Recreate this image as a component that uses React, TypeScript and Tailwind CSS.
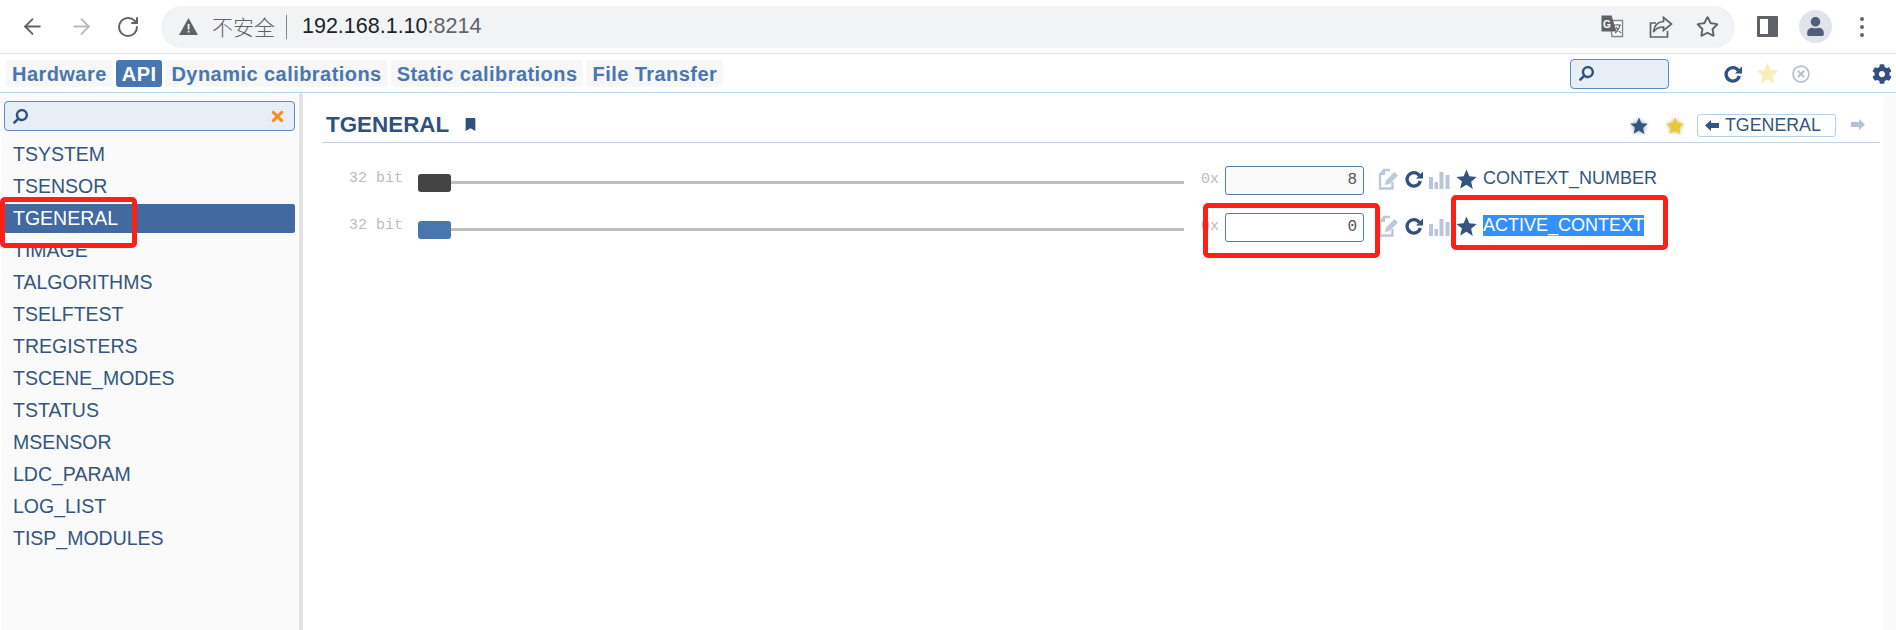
import React from 'react';
import { ArrowLeft, ArrowRight, RotateCw } from 'lucide-react';
import { FaSearch, FaTimes, FaCog, FaBookmark, FaRegTimesCircle, FaRegStar, FaUser } from 'react-icons/fa';

const modules = ['TSYSTEM', 'TSENSOR', 'TGENERAL', 'TIMAGE', 'TALGORITHMS', 'TSELFTEST', 'TREGISTERS', 'TSCENE_MODES', 'TSTATUS', 'MSENSOR', 'LDC_PARAM', 'LOG_LIST', 'TISP_MODULES'];
const tabs = ['Hardware', 'API', 'Dynamic calibrations', 'Static calibrations', 'File Transfer'];

function StarIcon({ size, className }: { size: number; className?: string }) {
  return (
    <svg width={size} height={size} viewBox="0 0 20 20" fill="currentColor" className={`shrink-0 ${className ?? ''}`}>
      <path d="M10 .5l2.700 6.500 7 .6-5.300 4.600 1.600 6.900L10 15l-6 3.600 1.600-6.900L.3 7.600l7-.6z" />
    </svg>
  );
}

function RepeatIcon({ className }: { className?: string }) {
  return (
    <svg width="18" height="18" viewBox="0 0 18 18" className={`shrink-0 ${className ?? ''}`}>
      <path d="M14.200 5.400A6.700 6.700 0 1 0 15.300 11" fill="none" stroke="currentColor" strokeWidth="3.300" />
      <path d="M18 1.500V8.500H11z" fill="currentColor" />
    </svg>
  );
}

function BlockArrow({ className }: { className?: string }) {
  return (
    <svg width="14" height="11" viewBox="0 0 14 11" fill="currentColor" className={`shrink-0 ${className ?? ''}`}>
      <path d="M0 5.500 6 0v3h8v5H6v3z" />
    </svg>
  );
}

function EditIcon() {
  return (
    <svg width="21" height="22" viewBox="0 0 21 22" className="text-[#bcc9da] shrink-0">
      <path d="M12 2H6L2 6.500V20.500H14.500V14" fill="none" stroke="currentColor" strokeWidth="2.400" />
      <path d="M2 7H7V2z" fill="currentColor" />
      <path d="M7 17l1-4.500L16.500 4l3.500 3.500-8.500 8.500z" fill="currentColor" />
    </svg>
  );
}

function BarsIcon() {
  return (
    <svg width="21" height="18" viewBox="0 0 21 18" className="text-[#b9c6d8] shrink-0" fill="currentColor">
      <rect x="0" y="6" width="4" height="12" />
      <rect x="5.500" y="11" width="3.500" height="7" />
      <rect x="10.500" y="1" width="4" height="17" />
      <rect x="16.500" y="4" width="4" height="14" />
    </svg>
  );
}

function TranslateIcon() {
  return (
    <svg width="23" height="23" viewBox="0 0 23 23">
      <path d="M9 5.500h12.500v16H11z" fill="#fff" stroke="#80868b" strokeWidth="1.400" />
      <path d="M0.500 0.500h10l5 16H0.500z" fill="#5f6368" />
      <text x="2" y="12.500" fontSize="10" fontWeight="700" fill="#fff" fontFamily="Liberation Sans, sans-serif">G</text>
      <path d="M13 10h7M16.500 9v1.500M14 18c3-2 4-4.500 5-8M15 12c1 2.500 3 4.500 5 6" fill="none" stroke="#5f6368" strokeWidth="1.200" />
    </svg>
  );
}

function ShareIcon() {
  return (
    <svg width="24" height="22" viewBox="0 0 24 22" fill="none" stroke="#5f6368" strokeWidth="1.700">
      <path d="M7 7H1.500v14h17v-6" />
      <path d="M14.500 1.500 22.500 8l-8 6.500V11c-4.500 0-7.500 1-10 5 .5-6 4-10 10-10.500z" />
    </svg>
  );
}

function SliderRow({ handle, value, filled, name, selected }: { handle: string; value: string; filled: string; name: string; selected?: boolean }) {
  return (
    <div className="h-[30px] flex items-center">
      <span className="w-[53px] ml-[27px] text-[15px] leading-none text-[#bdbdbd] font-['Liberation_Mono',monospace] -translate-y-[2px] whitespace-pre">32 bit</span>
      <div className="ml-[16px] w-[766px] flex items-center translate-y-[3px]">
        <div className={`w-[33px] h-[18px] rounded-[3px] ${handle}`} />
        <div className="flex-1 h-[3px] bg-[#bfbfbf] -translate-y-[1px]" />
      </div>
      <span className="ml-[17px] w-[24px] text-[15px] text-[#bdbdbd] font-['Liberation_Mono',monospace]">0x</span>
      <div className={`w-[139px] h-[29px] rounded-[3px] border border-[#4f7db5] ${filled} flex items-center justify-end pr-[6px] text-[16px] text-[#555] font-['Liberation_Mono',monospace]`}>{value}</div>
      <div className="ml-[14px] -translate-y-[1px]"><EditIcon /></div>
      <RepeatIcon className="ml-[6px] text-[#30517f] -translate-y-[1px]" />
      <div className="ml-[6px]"><BarsIcon /></div>
      <StarIcon size={21} className="ml-[6px] text-[#34557f] -translate-y-[1px]" />
      <span className={`ml-[6px] text-[18px] leading-[21px] whitespace-nowrap -translate-y-[2px] ${selected ? 'bg-[#3390ff] text-white' : 'text-[#34557f]'}`}>{name}</span>
    </div>
  );
}

export default function App() {
  return (
    <div className="relative w-[1896px] h-[630px] overflow-hidden bg-white font-['Liberation_Sans',sans-serif]">
      {/* browser chrome */}
      <div className="h-[54px] border-b border-[#dfe1e5] flex items-center pl-[20px] text-[#5f6368]">
        <ArrowLeft size={25} strokeWidth={1.800} />
        <ArrowRight size={25} strokeWidth={1.800} className="ml-[24px] text-[#b8babd]" />
        <RotateCw size={24} strokeWidth={2} className="ml-[22px]" />
        <div className="ml-[21px] w-[1574px] h-[42px] rounded-full bg-[#f1f3f4] flex items-center pl-[18px] pr-[16px]">
          <svg width="19" height="17" viewBox="0 0 19 17" fill="#5f6368"><path d="M9.500 0 19 17H0z" /><rect x="8.700" y="6" width="1.800" height="5.500" fill="#f1f3f4" /><rect x="8.700" y="12.700" width="1.800" height="1.800" fill="#f1f3f4" /></svg>
          <span className="ml-[14px] text-[21px] text-[#5f6368] font-['Noto_Sans_CJK_SC',sans-serif] font-light">不安全</span>
          <div className="ml-[11px] w-px h-[24px] bg-[#80868b]" />
          <span className="ml-[15px] text-[21.500px] text-[#202124]">192.168.1.10<span className="text-[#5f6368]">:8214</span></span>
          <div className="ml-auto flex items-center">
            <TranslateIcon />
            <div className="ml-[25px]"><ShareIcon /></div>
            <FaRegStar className="ml-[23px] text-[23px]" />
          </div>
        </div>
        <div className="ml-[22px] w-[21px] h-[21px] border-[3px] border-[#5f6368] border-r-[10px] rounded-[1px]" />
        <div className="ml-[21px] w-[33px] h-[33px] rounded-full bg-[#e1e4ea] flex items-center justify-center">
          <FaUser className="text-[#525e78] text-[19px]" />
        </div>
        <div className="ml-[28px] flex flex-col gap-[4px]">
          <div className="w-[4px] h-[4px] rounded-full bg-[#5f6368]" />
          <div className="w-[4px] h-[4px] rounded-full bg-[#5f6368]" />
          <div className="w-[4px] h-[4px] rounded-full bg-[#5f6368]" />
        </div>
      </div>

      {/* app toolbar */}
      <div className="h-[39px] border-b border-[#bdd3e8] flex items-center pl-[6px] pt-[1px]">
        <div className="flex gap-[3px]">
          {tabs.map(tab => (
            <div key={tab} className={`h-[27px] px-[6px] pt-[1px] rounded-[3px] flex items-center text-[20px] tracking-[0.45px] font-bold ${tab === 'API' ? 'bg-[#4776b3] text-white' : 'bg-[#f7f7f7] text-[#4776b3]'}`}>{tab}</div>
          ))}
        </div>
        <div className="ml-auto w-[99px] h-[30px] rounded-[4px] border border-[#5d8ac0] bg-[#e8eef6] flex items-center pl-[8px]">
          <FaSearch className="-scale-x-100 text-[#30517f] text-[15px]" />
        </div>
        <RepeatIcon className="ml-[55px] text-[#30517f]" />
        <StarIcon size={23} className="ml-[14px] text-[#f6efbd]" />
        <FaRegTimesCircle className="ml-[13px] text-[#b4c2d4] text-[18px]" />
        <FaCog className="ml-[62px] mr-[4px] text-[#30517f] text-[20px]" />
      </div>

      <div className="flex h-[537px]">
        {/* module list */}
        <aside className="w-[304px] pl-[1px] flex shrink-0">
          <div className="w-[298px] bg-[#fafafa] pt-[8px]">
            <div className="ml-[3px] w-[291px] h-[30px] rounded-[4px] border border-[#5d8ac0] bg-[#e8eef6] flex items-center justify-between px-[8px]">
              <FaSearch className="-scale-x-100 text-[#30517f] text-[15px]" />
              <FaTimes className="text-[#f78f1e] text-[17px]" />
            </div>
            <ul className="mt-[9px]">
              {modules.map(name => (
                <li key={name} className={`ml-[3px] w-[291px] h-[29px] mb-[3px] pl-[9px] flex items-center rounded-[2px] text-[19.500px] ${name === 'TGENERAL' ? 'bg-[#426aa0] text-white' : 'text-[#34557f]'}`}>{name}</li>
              ))}
            </ul>
          </div>
          <div className="w-[4px] h-full bg-[#e2e2e2] rounded-t-[2px]" />
        </aside>

        {/* register panel */}
        <main className="flex-1 pl-[18px] pt-[18px] flex">
          <div className="flex-1">
            <div className="h-[32px] border-b border-[#c3d4e8] flex items-center pl-[4px] pb-[4px] pr-[15px]">
              <h1 className="text-[22.400px] font-bold text-[#30517f]">TGENERAL</h1>
              <FaBookmark className="ml-[15px] text-[#30517f] text-[13px]" />
              <StarIcon size={18} className="ml-auto translate-y-[1px] text-[#34557f] drop-shadow-[0_0_2px_rgba(52,85,127,0.6)]" />
              <StarIcon size={18} className="ml-[18px] translate-y-[1px] text-[#e8c92e] drop-shadow-[0_0_2px_rgba(120,100,30,0.6)]" />
              <div className="ml-[13px] w-[139px] h-[23px] translate-y-[1px] rounded-[3px] border border-[#b9d0ea] flex items-center pl-[7px] text-[17.800px] text-[#34557f]">
                <BlockArrow className="mr-[6px]" />TGENERAL
              </div>
              <BlockArrow className="ml-[15px] text-[#b4c2d4] -scale-x-100" />
            </div>
            <div className="mt-[22px] flex flex-col gap-[17px]">
              <SliderRow handle="bg-[#444444]" value="8" filled="bg-[#fafafa]" name="CONTEXT_NUMBER" />
              <SliderRow handle="bg-[#4876ae]" value="0" filled="bg-white" name="ACTIVE_CONTEXT" selected />
            </div>
          </div>
          <div className="w-[13px] ml-[3px] -mt-[15px] bg-[#fafafa] rounded-tl-[5px]" />
        </main>
      </div>

      {/* red annotation boxes */}
      <div className="absolute left-0 top-[197px] w-[137px] h-[51px] border-[5px] border-[#fd2015] rounded-[5px]" />
      <div className="absolute left-[1203px] top-[203px] w-[177px] h-[55px] border-[5px] border-[#fd2015] rounded-[5px]" />
      <div className="absolute left-[1451px] top-[195px] w-[217px] h-[55px] border-[5px] border-[#fd2015] rounded-[5px]" />
    </div>
  );
}
